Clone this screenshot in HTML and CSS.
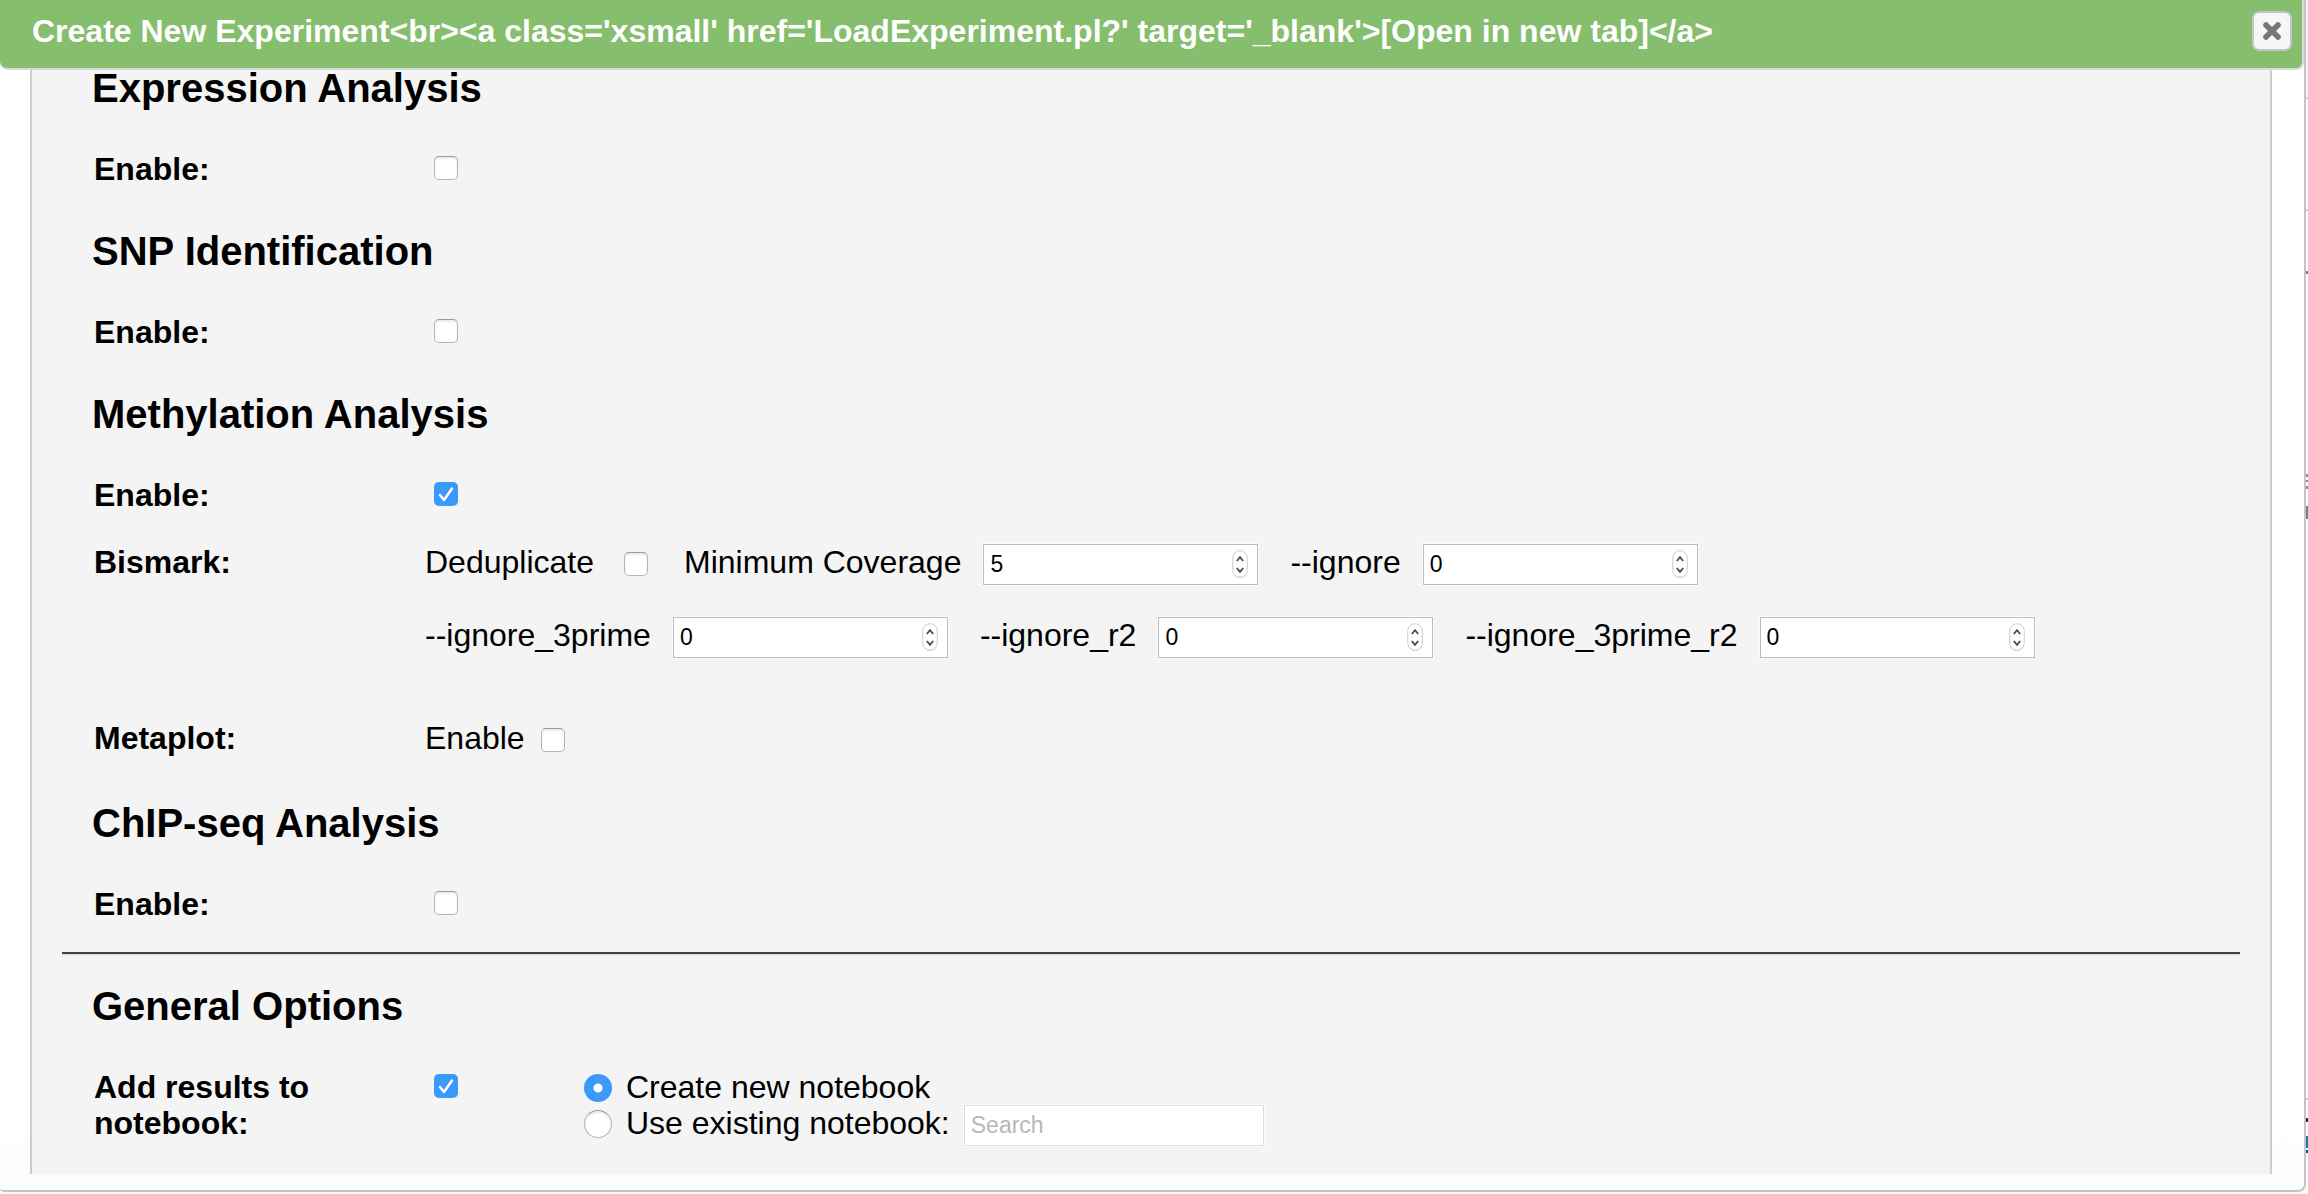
FILE: index.html
```html
<!DOCTYPE html>
<html lang="en">
<head>
<meta charset="utf-8">
<title>Create New Experiment</title>
<link rel="stylesheet" href="styles.css">
</head>
<body>
<svg class="defs" aria-hidden="true">
  <symbol id="stepper" viewBox="0 0 16 29">
    <rect x="1" y="2" width="14" height="26" rx="7" fill="#ddd"/>
    <rect x=".75" y=".75" width="14.5" height="26.5" rx="7.25" fill="#fff" stroke="#ccc"/>
    <path d="M4.8 11 8 7.2 11.2 11M4.8 18 8 21.800 11.200 18" fill="none" stroke="#4a4a4a" stroke-width="1.800"/>
  </symbol>
</svg>
<div class="page">
  <main class="dialog">
    <header class="titlebar">
      <h1 class="title">Create New Experiment&lt;br&gt;&lt;a class='xsmall' href='LoadExperiment.pl?' target='_blank'&gt;[Open in new tab]&lt;/a&gt;</h1>
      <button class="close" type="button" aria-label="Close">
        <svg viewBox="0 0 20 20" width="20" height="20"><path d="M4 4 16 16M16 4 4 16" stroke="#777" stroke-width="5.600" stroke-linecap="round"/></svg>
      </button>
    </header>
    <form class="panel">
      <section class="group">
        <h2>Expression Analysis</h2>
        <div class="row">
          <label class="name" for="expression">Enable:</label>
          <input class="check lead" type="checkbox" id="expression">
        </div>
      </section>
      <section class="group">
        <h2>SNP Identification</h2>
        <div class="row">
          <label class="name" for="snp">Enable:</label>
          <input class="check lead" type="checkbox" id="snp">
        </div>
      </section>
      <section class="group methylation">
        <h2>Methylation Analysis</h2>
        <div class="row">
          <label class="name" for="methylation">Enable:</label>
          <input class="check lead" type="checkbox" id="methylation" checked>
        </div>
        <div class="row bismark">
          <span class="name">Bismark:</span>
          <div class="lines">
            <div class="line">
              <div class="option wide"><label for="dedup">Deduplicate</label><input class="check" type="checkbox" id="dedup"></div>
              <div class="option"><label for="coverage">Minimum Coverage</label><span class="number"><input type="number" id="coverage" value="5"><svg><use href="#stepper"/></svg></span></div>
              <div class="option"><label for="ignore">--ignore</label><span class="number"><input type="number" id="ignore" value="0"><svg><use href="#stepper"/></svg></span></div>
            </div>
            <div class="line">
              <div class="option"><label for="ignore3">--ignore_3prime</label><span class="number"><input type="number" id="ignore3" value="0"><svg><use href="#stepper"/></svg></span></div>
              <div class="option"><label for="ignorer2">--ignore_r2</label><span class="number"><input type="number" id="ignorer2" value="0"><svg><use href="#stepper"/></svg></span></div>
              <div class="option"><label for="ignore3r2">--ignore_3prime_r2</label><span class="number"><input type="number" id="ignore3r2" value="0"><svg><use href="#stepper"/></svg></span></div>
            </div>
          </div>
        </div>
        <div class="row metaplot">
          <span class="name">Metaplot:</span>
          <div class="option tight"><label for="metaplot">Enable</label><input class="check" type="checkbox" id="metaplot"></div>
        </div>
      </section>
      <section class="group last">
        <h2>ChIP-seq Analysis</h2>
        <div class="row">
          <label class="name" for="chip">Enable:</label>
          <input class="check lead" type="checkbox" id="chip">
        </div>
      </section>
      <hr>
      <section class="group last">
        <h2>General Options</h2>
        <div class="row">
          <label class="name" for="add">Add results to notebook:</label>
          <div class="notebook">
            <input class="check lead" type="checkbox" id="add" checked>
            <div class="choices">
              <div class="choice"><input class="radio" type="radio" name="notebook" id="new" checked><label for="new">Create new notebook</label></div>
              <div class="choice"><input class="radio" type="radio" name="notebook" id="existing"><label for="existing">Use existing notebook:</label><input class="search" type="text" placeholder="Search" aria-label="Search notebooks"></div>
            </div>
          </div>
        </div>
      </section>
    </form>
  </main>
  <aside class="backdrop"></aside>
</div>
</body>
</html>
```
FILE: styles.css
```css
* { box-sizing: border-box; }

body {
  margin: 0;
  background: #fafafa;
  color: #000;
  font: 32px/36px "Liberation Sans", Arial, Helvetica, sans-serif;
}

.defs { display: none; }

.page {
  display: flex;
  min-height: 100vh;
}

.dialog {
  flex: 1;
  margin-bottom: 2px;
  border: solid #c4c4c4;
  border-width: 0 2px 2px 0;
  border-radius: 0 0 8px 4px;
  background: linear-gradient(#fff 94%, #fcfcfc);
}

/* sliver of the page that stays visible beside the dialog */
.backdrop {
  width: 2px;
  background: linear-gradient(
    #f5f5f5 97px, #ccc 97px 99px, #fff 99px 209px, #ccc 209px 211px,
    #fff 211px 271px, #777 271px 274px, #fff 274px 474px, #888 474px 477px,
    #fff 477px 480px, #888 480px 482px, #fff 482px 486px, #888 486px 489px,
    #fff 489px 506px, #77798c 506px 519px, #fff 519px 1098px, #ccc 1098px 1100px,
    #fff 1100px 1118px, #222 1118px 1122px, #fff 1122px 1136px, #1b75b5 1136px 1148px,
    #fff 1148px 1150px, #135080 1150px 1153px, #fafafa 1153px);
}

.titlebar {
  position: relative;
  display: flex;
  justify-content: space-between;
  align-items: flex-start;
  height: 70px;
  padding: 11px 10px 0 32px;
  border: solid #d9d9d9;
  border-width: 0 2px 2px 0;
  border-radius: 0 0 8px 8px;
  background: #85be6d;
}

.title {
  margin: 2px 0 0;
  color: #fff;
  font-size: 32px;
  line-height: 36px;
}

.close {
  display: grid;
  place-items: center;
  width: 40px;
  height: 40px;
  padding: 0;
  border: 2px solid #c4c4c4;
  border-radius: 7px;
  background: #f6f6f6;
}

.panel {
  margin: -4px 32px 16px 30px;
  padding: 0 30px 33px;
  border: solid #ccc;
  border-width: 0 2px;
  background: #f4f4f4;
}

.group {
  padding: 0 30px;
  margin-bottom: 42px;
}

.methylation { margin-bottom: 45px; }
.last { margin-bottom: 0; }

h2 {
  margin: 0 0 41px;
  font-size: 40px;
  line-height: 44px;
}

hr {
  height: 3px;
  margin: 30px 0 29px;
  border: 0;
  border-top: 2px solid #444;
  background: #d8d8d8;
}

.row {
  display: grid;
  grid-template-columns: 331px 1fr;
  align-items: start;
  padding-left: 2px;
}

.name {
  max-width: 260px;
  font-weight: bold;
}

.bismark { margin-top: 31px; }
.metaplot { margin-top: 62px; }

.lines {
  display: grid;
  gap: 32px;
}

.line {
  display: flex;
  gap: 32px;
}

.option {
  display: flex;
  align-items: flex-start;
  gap: 22px;
}

.option.tight { gap: 16px; }

.option.wide {
  gap: 30px;
  margin-right: 4px;
}

.check, .radio {
  appearance: none;
  flex: none;
  width: 24px;
  height: 24px;
  margin: 8px 0 0;
  border: 1px solid #b4b4b4;
  border-top-color: #999;
  border-radius: 5px;
  background: #fff;
  box-shadow: inset 0 2px 2px #ececec;
}

.lead { margin: 5px 0 0 9px; }

.check:checked {
  border: 0;
  box-shadow: none;
  background: #3b99fc url("data:image/svg+xml,%3Csvg xmlns='http://www.w3.org/2000/svg' viewBox='0 0 24 24'%3E%3Cpath d='M6 13 10 18 18 6.500' fill='none' stroke='white' stroke-width='2.500' stroke-linecap='round' stroke-linejoin='round'/%3E%3C/svg%3E");
}

.radio {
  width: 28px;
  height: 28px;
  margin: 5px 14px 0 0;
  border-radius: 50%;
}

.radio:checked {
  border: 0;
  box-shadow: none;
  background: radial-gradient(circle, #fff 4px, #3b99fc 5px);
}

.number {
  position: relative;
  display: block;
}

.number input, .search {
  appearance: textfield;
  display: block;
  width: 275px;
  height: 41px;
  margin: 0;
  padding: 0 6px;
  border: 1px solid #bbb;
  border-radius: 0;
  outline: 1px solid #fbfbfb;
  background: #fff;
  color: #000;
  font: 23px "Liberation Sans", Arial, Helvetica, sans-serif;
}

.number input::-webkit-inner-spin-button { appearance: none; }

.number svg {
  position: absolute;
  top: 6px;
  right: 10px;
  width: 16px;
  height: 29px;
}

.notebook {
  display: flex;
  align-items: flex-start;
  gap: 126px;
}

.choice {
  display: flex;
  align-items: flex-start;
  height: 36px;
}

.search {
  width: 300px;
  margin: 0 0 0 14px;
  border-color: #ddd;
}

.search::placeholder { color: #b8b8b8; }
```
